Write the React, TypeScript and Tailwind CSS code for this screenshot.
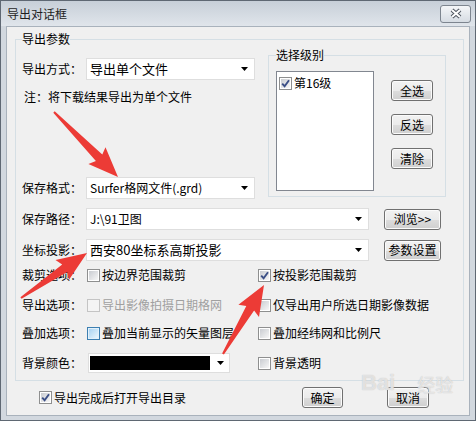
import type { ReactNode } from "react";

const btn =
  "flex h-[21px] items-center justify-center rounded-[3px] border border-[#707070] bg-[linear-gradient(#f2f2f2_0%,#ebebeb_50%,#dddddd_51%,#cfcfcf_100%)] text-[12px] leading-[16px] text-black shadow-[inset_0_0_0_1px_#fbfbfb]";

function Check({ checked, disabled, hot }: { checked?: boolean; disabled?: boolean; hot?: boolean }) {
  return (
    <span
      className={`relative flex h-[13px] w-[13px] shrink-0 items-center justify-center border ${
        disabled ? "border-[#c4c4c4] bg-[#f4f4f4]" : hot ? "border-[#3c7fb1] bg-[#e3f1fb]" : "border-[#8e8f8f] bg-white"
      }`}
    >
      <span
        className={`h-[9px] w-[9px] ${
          disabled
            ? "bg-[#f4f4f4]"
            : hot
              ? "bg-[linear-gradient(135deg,#a9d3f2,#eaf6fd)]"
              : "bg-[linear-gradient(135deg,#c9ccd1,#f7f7f7)]"
        }`}
      />
      {checked ? (
        <svg className="absolute left-0 top-0" width="11" height="11" viewBox="0 0 11 11">
          <path d="M2.2 5.6 L4.6 8.2 L9 2.2" fill="none" stroke="#3b4f86" strokeWidth="1.9" />
        </svg>
      ) : null}
    </span>
  );
}

function Option({ label, checked, disabled, hot }: { label: string; checked?: boolean; disabled?: boolean; hot?: boolean }) {
  return (
    <span className="flex items-center gap-[2px]">
      <Check checked={checked} disabled={disabled} hot={hot} />
      <span className={disabled ? "text-[#a0a0a0]" : "text-black"}>{label}</span>
    </span>
  );
}

function Arrow() {
  return (
    <svg width="7" height="4" viewBox="0 0 7 4" className="shrink-0">
      <path d="M0 0 H7 L3.5 4 Z" fill="#000" />
    </svg>
  );
}

function Combo({ text, width, big }: { text: ReactNode; width: string; big?: boolean }) {
  return (
    <div className={`flex h-[22px] items-center justify-between border border-[#dedede] bg-white pl-[3px] pr-[6px] ${width}`}>
      <span className={big ? "text-[13px] leading-[16px]" : "text-[12px] leading-[16px]"}>{text}</span>
      <Arrow />
    </div>
  );
}

function Label({ children, w = "w-[64px]" }: { children: string; w?: string }) {
  return <span className={`shrink-0 ${w}`}>{children}</span>;
}

function arrowPoints(x1: number, y1: number, x2: number, y2: number) {
  const dx = x2 - x1;
  const dy = y2 - y1;
  const len = Math.hypot(dx, dy);
  const ux = dx / len;
  const uy = dy / len;
  const px = -uy;
  const py = ux;
  const headL = 27;
  const headW = 24;
  const neckW = 9;
  const tailW = 2;
  const nx = x2 - ux * headL;
  const ny = y2 - uy * headL;
  const bx = nx - ux * 3;
  const by = ny - uy * 3;
  const pts = [
    [x1 + (px * tailW) / 2, y1 + (py * tailW) / 2],
    [nx + (px * neckW) / 2, ny + (py * neckW) / 2],
    [bx + (px * headW) / 2, by + (py * headW) / 2],
    [x2, y2],
    [bx - (px * headW) / 2, by - (py * headW) / 2],
    [nx - (px * neckW) / 2, ny - (py * neckW) / 2],
    [x1 - (px * tailW) / 2, y1 - (py * tailW) / 2],
  ];
  return pts.map((p) => p.map((v) => v.toFixed(1)).join(",")).join(" ");
}

export default function App() {
  return (
    <div className="relative flex h-[421px] w-[476px] flex-col overflow-hidden border border-[#5f6873] bg-[#d2d8df] font-['Microsoft_YaHei','Noto_Sans_CJK_SC',sans-serif] text-[12px] leading-[16px] text-black">
      {/* title bar */}
      <div className="flex h-[25px] shrink-0 items-center justify-between bg-[linear-gradient(#c7cfd8,#e0e5eb)] pl-[6px] pr-[4px]">
        <span className="text-[#1f1f1f]">导出对话框</span>
        <span className="flex h-[18px] w-[31px] items-center justify-center rounded-[3px] border border-[#7d858f] bg-[linear-gradient(#f4f6f8,#d6dce3)]">
          <svg width="14" height="11" viewBox="0 0 14 11">
            <path d="M3 2 L11 9 M11 2 L3 9" stroke="#4f5660" strokeWidth="4" />
            <path d="M3 2 L11 9 M11 2 L3 9" stroke="#ffffff" strokeWidth="2" />
          </svg>
        </span>
      </div>

      {/* client */}
      <div className="mx-[5px] mb-[4px] flex flex-1 flex-col border border-[#a9b2bc] bg-[#f0f0f0]">
        <fieldset className="ml-[8px] mr-[5px] mt-[4px] border border-[#d5dfe5] pb-[7px] pl-[6px]">
          <legend className="leading-[16px]">导出参数</legend>

          <div className="flex items-start">
            <div className="flex w-[233px] shrink-0 flex-col">
              <div className="mt-[11px] flex items-center">
                <Label>导出方式：</Label>
                <Combo text="导出单个文件" width="w-[169px]" big />
              </div>
              <div className="mt-[9px] pl-[2px]">注：将下载结果导出为单个文件</div>
              <div className="mt-[72px] flex items-center">
                <Label>保存格式：</Label>
                <Combo text="Surfer格网文件(.grd)" width="w-[169px]" />
              </div>
            </div>

            <fieldset className="ml-[13px] w-[178px] shrink-0 border border-[#d5dfe5] pb-[5px] pl-[7px]">
              <legend className="leading-[16px]">选择级别</legend>
              <div className="flex items-start">
                <div className="mt-[8px] h-[120px] w-[98px] shrink-0 border border-[#828790] bg-white pl-[2px] pt-[3px]">
                  <Option label="第16级" checked />
                </div>
                <div className="ml-[17px] flex flex-col gap-[13px] pt-[17px]">
                  <button className={`${btn} w-[42px]`}>全选</button>
                  <button className={`${btn} w-[42px]`}>反选</button>
                  <button className={`${btn} w-[42px]`}>清除</button>
                </div>
              </div>
            </fieldset>
          </div>

          <div className="mt-[9px] flex items-center">
            <Label>保存路径：</Label>
            <Combo text="J:\91卫图" width="w-[283px]" />
            <button className={`${btn} ml-[15px] w-[57px] text-[#555]`}>浏览&gt;&gt;</button>
          </div>

          <div className="mt-[9px] flex items-center">
            <Label>坐标投影：</Label>
            <Combo text="西安80坐标系高斯投影" width="w-[283px]" big />
            <button className={`${btn} ml-[15px] w-[57px]`}>参数设置</button>
          </div>

          <div className="mt-[6px] flex h-[16px] items-center">
            <div className="flex w-[236px] shrink-0 items-center">
              <Label w="w-[65px]">裁剪选项：</Label>
              <Option label="按边界范围裁剪" />
            </div>
            <Option label="按投影范围裁剪" checked />
          </div>

          <div className="mt-[14px] flex h-[16px] items-center">
            <div className="flex w-[236px] shrink-0 items-center">
              <Label w="w-[65px]">导出选项：</Label>
              <Option label="导出影像拍摄日期格网" disabled />
            </div>
            <Option label="仅导出用户所选日期影像数据" />
          </div>

          <div className="mt-[12px] flex h-[16px] items-center">
            <div className="flex w-[236px] shrink-0 items-center">
              <Label w="w-[65px]">叠加选项：</Label>
              <Option label="叠加当前显示的矢量图层" hot />
            </div>
            <Option label="叠加经纬网和比例尺" />
          </div>

          <div className="mt-[12px] flex h-[20px] items-center">
            <div className="flex w-[236px] shrink-0 items-center">
              <Label w="w-[66px]">背景颜色：</Label>
              <div className="flex h-[20px] w-[142px] items-center border border-[#dedede] bg-white pl-[1px] pr-[5px]">
                <span className="h-[14px] w-[120px] bg-black" />
                <span className="ml-auto">
                  <Arrow />
                </span>
              </div>
            </div>
            <Option label="背景透明" />
          </div>
        </fieldset>

        <div className="mt-[6px] flex h-[21px] items-center pl-[32px]">
          <div className="w-[263px] shrink-0">
            <Option label="导出完成后打开导出目录" checked />
          </div>
          <button className={`${btn} w-[41px]`}>确定</button>
          <button className={`${btn} ml-[44px] w-[42px]`}>取消</button>
        </div>
      </div>

      {/* watermark */}
      <div className="pointer-events-none absolute left-[360px] top-[370px] flex items-end text-white/60 [text-shadow:0_0_1px_#b4b4b4]">
        <span className="font-['Liberation_Sans',sans-serif] text-[22px] font-bold leading-[24px]">Bai</span>
        <span className="ml-[22px] text-[18px] leading-[22px]">经验</span>
      </div>

      {/* annotation arrows */}
      <svg className="pointer-events-none absolute left-0 top-0" width="476" height="421" viewBox="0 0 476 421">
        <polygon points={arrowPoints(53, 111, 117, 176)} fill="#ec3b36" />
        <polygon points={arrowPoints(20, 297, 86, 252)} fill="#ec3b36" />
        <polygon points={arrowPoints(222, 353, 263, 284)} fill="#ec3b36" />
      </svg>
    </div>
  );
}
